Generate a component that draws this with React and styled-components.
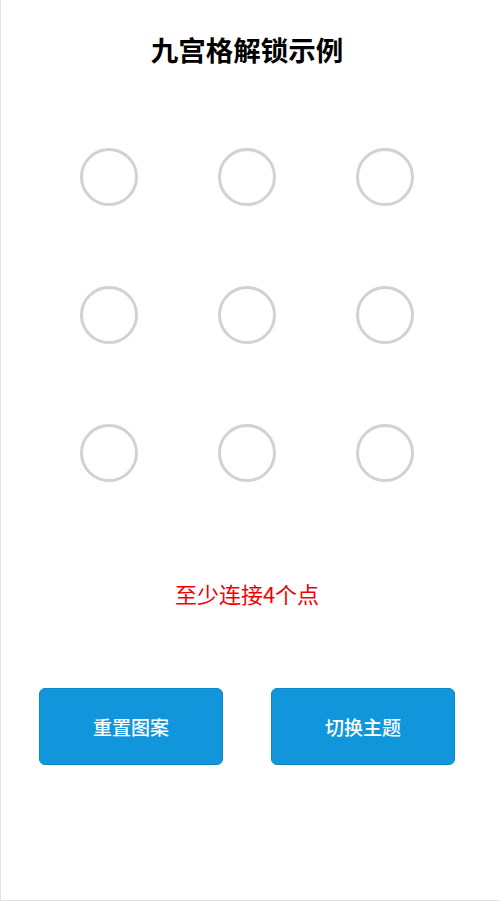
import React, { useState } from "react";
import styled, { createGlobalStyle } from "styled-components";

const GlobalStyle = createGlobalStyle`
  html, body {
    margin: 0;
    padding: 0;
    background: #ffffff;
  }
  body {
    font-family: "Noto Sans CJK SC", "Noto Sans", sans-serif;
  }
`;

const Frame = styled.div`
  box-sizing: border-box;
  width: 500px;
  height: 901px;
  border-left: 1px solid #dfe2e6;
  border-bottom: 1px solid #dfe2e6;
  background: #ffffff;
`;

const Page = styled.div`
  width: 492px;
  display: flex;
  flex-direction: column;
  align-items: center;
`;

const Title = styled.h1`
  margin: 31px 0 0;
  font-size: 27.5px;
  line-height: 36px;
  font-weight: 700;
  color: #000000;
`;

const Grid = styled.div`
  margin-top: 81px;
  display: grid;
  grid-template-columns: repeat(3, 58px);
  grid-auto-rows: 58px;
  column-gap: 80px;
  row-gap: 80px;
`;

const Dot = styled.div`
  box-sizing: border-box;
  width: 58px;
  height: 58px;
  border-radius: 50%;
  border: 3px solid ${(props) => (props.active ? "#1296db" : "#d2d2d2")};
  background: #ffffff;
`;

const Hint = styled.p`
  margin: 96px 0 0;
  font-size: 22px;
  line-height: 30px;
  color: #f00000;
`;

const Actions = styled.div`
  margin-top: 80px;
  display: flex;
  gap: 48px;
`;

const Button = styled.button`
  box-sizing: border-box;
  width: 184px;
  height: 77px;
  border: 1px solid #0f88c8;
  border-radius: 6px;
  background: #1296db;
  color: #ffffff;
  font-family: "Noto Sans CJK SC", "Noto Sans", sans-serif;
  font-size: 19px;
  font-weight: 500;
  cursor: pointer;
`;

export default function App() {
  const [active, setActive] = useState([]);

  return (
    <>
      <GlobalStyle />
      <Frame>
        <Page>
          <Title>九宫格解锁示例</Title>
          <Grid>
            {Array.from({ length: 9 }).map((_, i) => (
              <Dot key={i} active={active.includes(i)} />
            ))}
          </Grid>
          <Hint>至少连接4个点</Hint>
          <Actions>
            <Button onClick={() => setActive([])}>重置图案</Button>
            <Button>切换主题</Button>
          </Actions>
        </Page>
      </Frame>
    </>
  );
}
